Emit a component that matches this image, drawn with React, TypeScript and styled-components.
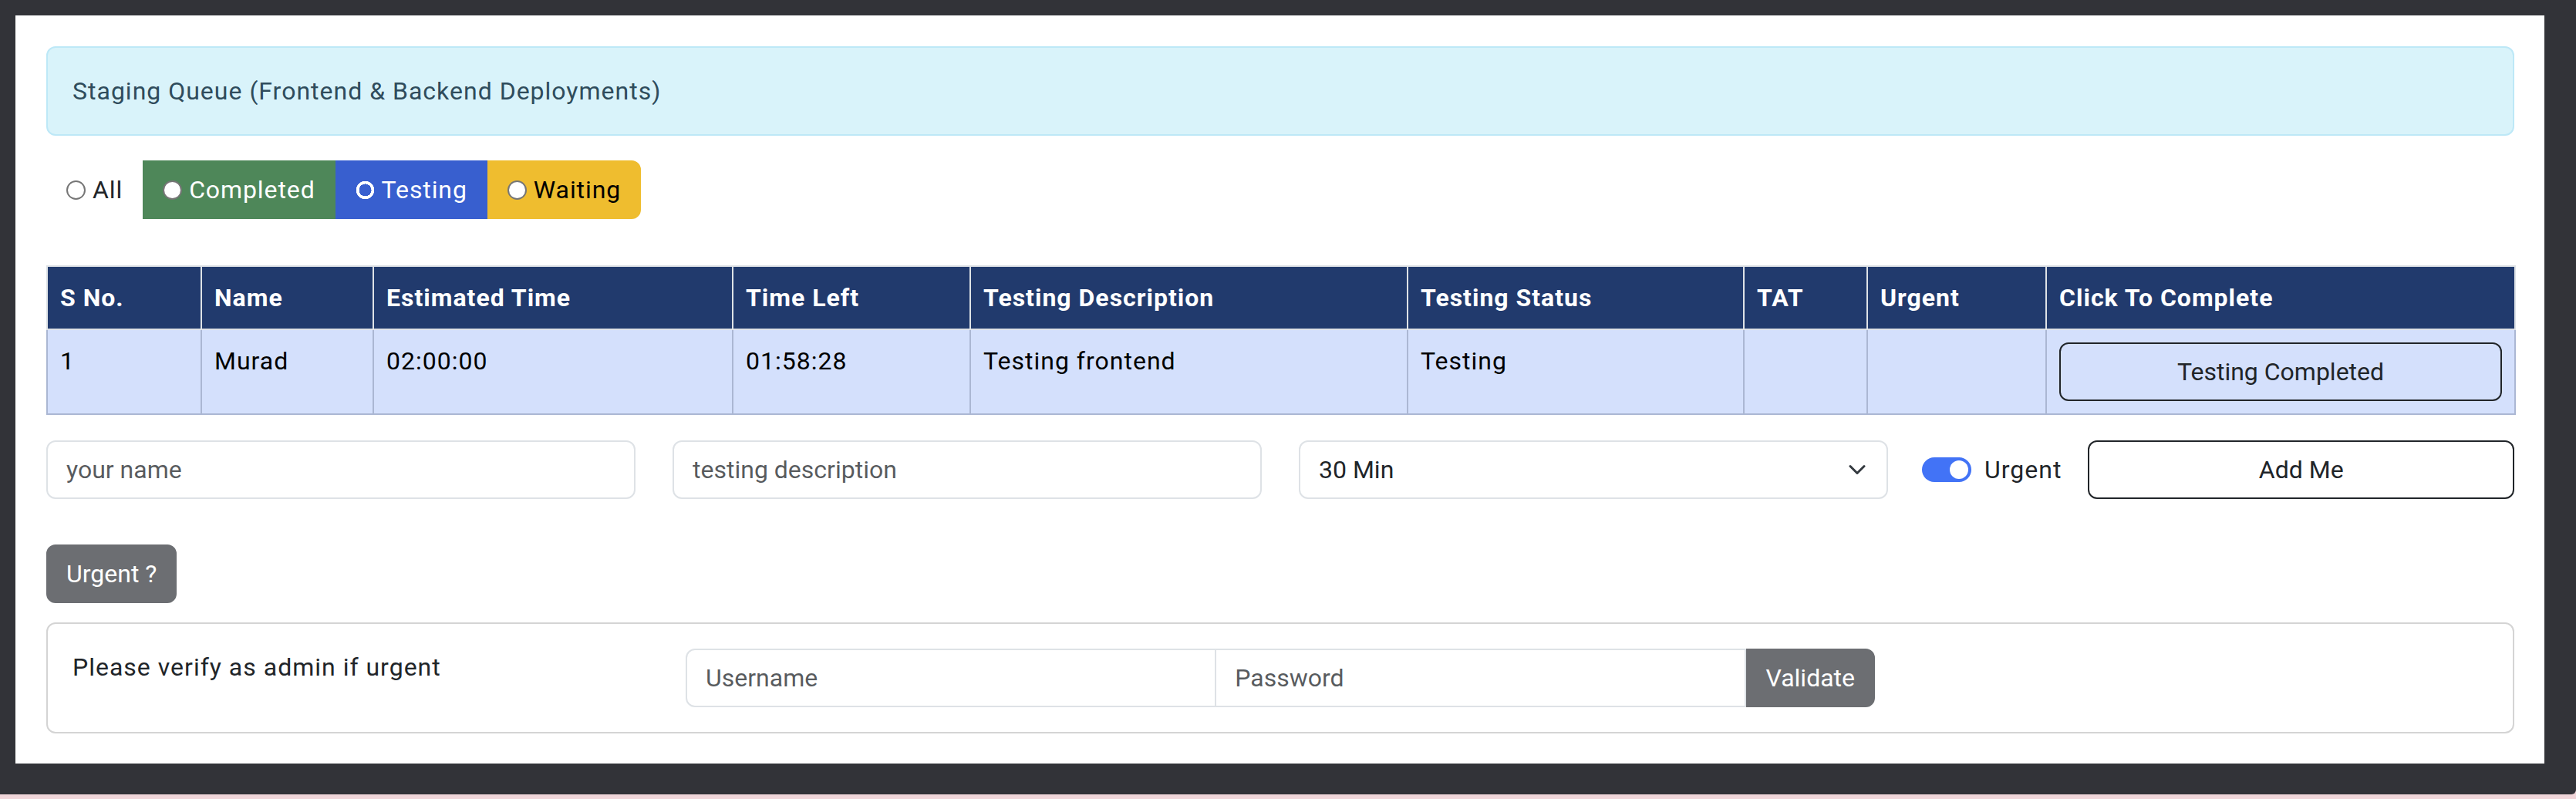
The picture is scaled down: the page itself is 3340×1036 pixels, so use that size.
import React from "react";
import styled, { createGlobalStyle } from "styled-components";

const GlobalStyle = createGlobalStyle`
  * { box-sizing: border-box; }
  html, body { margin: 0; padding: 0; background: #f0d5d9; }
  body {
    font-family: Roboto, "Liberation Sans", Arial, sans-serif;
    letter-spacing: 1px;
    width: 3340px;
    height: 1036px;
    overflow: hidden;
    color: #212529;
  }
`;

const Frame = styled.div`
  background: #323338;
  height: 1030px;
  padding: 20px 41px 40px 20px;
  border-bottom-right-radius: 6px;
`;

const Panel = styled.div`
  background: #ffffff;
  height: 970px;
  padding: 40px 39px 40px 40px;
  display: flex;
  flex-direction: column;
`;

const Alert = styled.div`
  background: #d9f3fa;
  border: 2px solid #bde8f7;
  border-radius: 12px;
  color: #2f4c5c;
  font-size: 32px;
  line-height: 48px;
  padding: 32px;
  margin-bottom: 32px;
`;

const FilterGroup = styled.div`
  display: flex;
  align-self: flex-start;
  margin-bottom: 60px;
`;

const FilterBtn = styled.label<{ $bg: string; $fg: string; $last?: boolean }>`
  display: inline-flex;
  align-items: center;
  gap: 9px;
  height: 76px;
  padding: 12px 24px;
  border: 2px solid ${(p) => p.$bg};
  background: ${(p) => p.$bg};
  color: ${(p) => p.$fg};
  font-size: 32px;
  line-height: 48px;
  letter-spacing: 0.9px;
  border-radius: ${(p) => (p.$last ? "0 12px 12px 0" : "0")};
`;

const RadioDot = styled.span<{ $checked?: boolean }>`
  display: inline-block;
  width: 25px;
  height: 25px;
  border-radius: 50%;
  flex: none;
  ${(p) =>
    p.$checked
      ? `background: radial-gradient(circle, transparent 0 8px, #ffffff 8px 11.5px, transparent 12px);`
      : `background: #ffffff; border: 2px solid #767676;`}
`;

const Table = styled.table`
  width: 100%;
  border-collapse: collapse;
  table-layout: fixed;
  font-size: 32px;
  line-height: 48px;
  margin-bottom: 33px;
`;

const Th = styled.th<{ $w: number }>`
  width: ${(p) => p.$w}px;
  background: #213a6d;
  color: #ffffff;
  font-weight: 700;
  text-align: left;
  padding: 16px;
  border: 2px solid #dee2e6;
`;

const Td = styled.td`
  background: #d4e0fc;
  color: #000000;
  padding: 16px;
  vertical-align: top;
  border: 2px solid #abb7d3;
`;

const OutlineBtn = styled.button<{ $full?: boolean }>`
  height: 76px;
  padding: 12px 24px;
  background: transparent;
  border: 2px solid #212529;
  border-radius: 12px;
  color: #212529;
  font-family: inherit;
  font-size: 32px;
  line-height: 48px;
  ${(p) => (p.$full ? "width: 100%;" : "flex: 1;")}
`;

const FormRow = styled.div`
  display: grid;
  grid-template-columns: repeat(4, 1fr);
  column-gap: 48px;
  margin-bottom: 59px;
`;

const TextInput = styled.input<{ $group?: "first" | "mid" }>`
  height: 76px;
  width: 100%;
  min-width: 0;
  padding: 12px 24px;
  border: 2px solid #dee2e6;
  border-radius: ${(p) =>
    p.$group === "first" ? "12px 0 0 12px" : p.$group === "mid" ? "0" : "12px"};
  ${(p) => (p.$group === "mid" ? "margin-left: -2px;" : "")}
  ${(p) => (p.$group ? "flex: 1;" : "")}
  font-family: inherit;
  font-size: 32px;
  line-height: 48px;
  color: #212529;
  background: #ffffff;
  outline: none;
  &::placeholder {
    color: rgba(33, 37, 41, 0.75);
  }
`;

const SelectWrap = styled.div`
  position: relative;
`;

const Select = styled.select`
  appearance: none;
  -webkit-appearance: none;
  width: 100%;
  height: 76px;
  padding: 12px 72px 12px 24px;
  border: 2px solid #dee2e6;
  border-radius: 12px;
  background: #ffffff;
  font-family: inherit;
  font-size: 32px;
  line-height: 48px;
  color: #212529;
  outline: none;
`;

const Chevron = styled.svg`
  position: absolute;
  right: 29px;
  top: 50%;
  transform: translateY(-50%);
  pointer-events: none;
`;

const SwitchCell = styled.div`
  display: flex;
  align-items: center;
`;

const Switch = styled.span<{ $on?: boolean }>`
  display: inline-flex;
  align-items: center;
  justify-content: ${(p) => (p.$on ? "flex-end" : "flex-start")};
  width: 64px;
  height: 32px;
  padding: 0 4px;
  margin-left: -4px;
  border-radius: 16px;
  background: ${(p) => (p.$on ? "#4273f6" : "#ffffff")};
  flex: none;
  &::after {
    content: "";
    width: 24px;
    height: 24px;
    border-radius: 50%;
    background: #ffffff;
  }
`;

const SwitchLabel = styled.span`
  font-size: 32px;
  line-height: 48px;
  color: #212529;
  margin: 0 34px 0 17px;
`;

const GreyBtn = styled.button<{ $append?: boolean }>`
  height: 76px;
  padding: 12px 24px;
  background: #6c6e72;
  border: 2px solid #6c6e72;
  border-radius: ${(p) => (p.$append ? "0 12px 12px 0" : "12px")};
  color: #ffffff;
  font-family: inherit;
  font-size: 32px;
  line-height: 48px;
  align-self: flex-start;
  flex: none;
`;

const Card = styled.div`
  margin-top: 25px;
  border: 2px solid #d4d4d4;
  border-radius: 12px;
  padding: 32px;
  display: grid;
  grid-template-columns: 747px 1542px;
  column-gap: 48px;
  align-items: start;
`;

const CardText = styled.div`
  font-size: 32px;
  line-height: 48px;
  color: #212529;
`;

const InputGroup = styled.div`
  display: flex;
`;

const columns: [string, number][] = [
  ["S No.", 200],
  ["Name", 223],
  ["Estimated Time", 466],
  ["Time Left", 308],
  ["Testing Description", 567],
  ["Testing Status", 436],
  ["TAT", 160],
  ["Urgent", 232],
  ["Click To Complete", 608],
];

export default function App() {
  return (
    <>
      <GlobalStyle />
      <Frame>
        <Panel>
          <Alert>Staging Queue (Frontend &amp; Backend Deployments)</Alert>

          <FilterGroup>
            <FilterBtn $bg="transparent" $fg="#212529">
              <RadioDot />
              All
            </FilterBtn>
            <FilterBtn $bg="#4e8759" $fg="#ffffff">
              <RadioDot />
              Completed
            </FilterBtn>
            <FilterBtn $bg="#385fcf" $fg="#ffffff">
              <RadioDot $checked />
              Testing
            </FilterBtn>
            <FilterBtn $bg="#efbd2f" $fg="#000000" $last>
              <RadioDot />
              Waiting
            </FilterBtn>
          </FilterGroup>

          <Table>
            <thead>
              <tr>
                {columns.map(([label, w]) => (
                  <Th key={label} $w={w}>
                    {label}
                  </Th>
                ))}
              </tr>
            </thead>
            <tbody>
              <tr>
                <Td>1</Td>
                <Td>Murad</Td>
                <Td>02:00:00</Td>
                <Td>01:58:28</Td>
                <Td>Testing frontend</Td>
                <Td>Testing</Td>
                <Td></Td>
                <Td></Td>
                <Td>
                  <OutlineBtn $full>Testing Completed</OutlineBtn>
                </Td>
              </tr>
            </tbody>
          </Table>

          <FormRow>
            <TextInput placeholder="your name" />
            <TextInput placeholder="testing description" />
            <SelectWrap>
              <Select defaultValue="30">
                <option value="30">30 Min</option>
                <option value="60">1 Hour</option>
                <option value="120">2 Hours</option>
              </Select>
              <Chevron width="22" height="13" viewBox="0 0 22 13">
                <path
                  d="M2 2 L11 11 L20 2"
                  fill="none"
                  stroke="#343a40"
                  strokeWidth="3"
                  strokeLinecap="round"
                  strokeLinejoin="round"
                />
              </Chevron>
            </SelectWrap>
            <SwitchCell>
              <Switch $on />
              <SwitchLabel>Urgent</SwitchLabel>
              <OutlineBtn>Add Me</OutlineBtn>
            </SwitchCell>
          </FormRow>

          <GreyBtn>Urgent ?</GreyBtn>

          <Card>
            <CardText>Please verify as admin if urgent</CardText>
            <InputGroup>
              <TextInput $group="first" placeholder="Username" />
              <TextInput $group="mid" placeholder="Password" type="password" />
              <GreyBtn $append>Validate</GreyBtn>
            </InputGroup>
          </Card>
        </Panel>
      </Frame>
    </>
  );
}
